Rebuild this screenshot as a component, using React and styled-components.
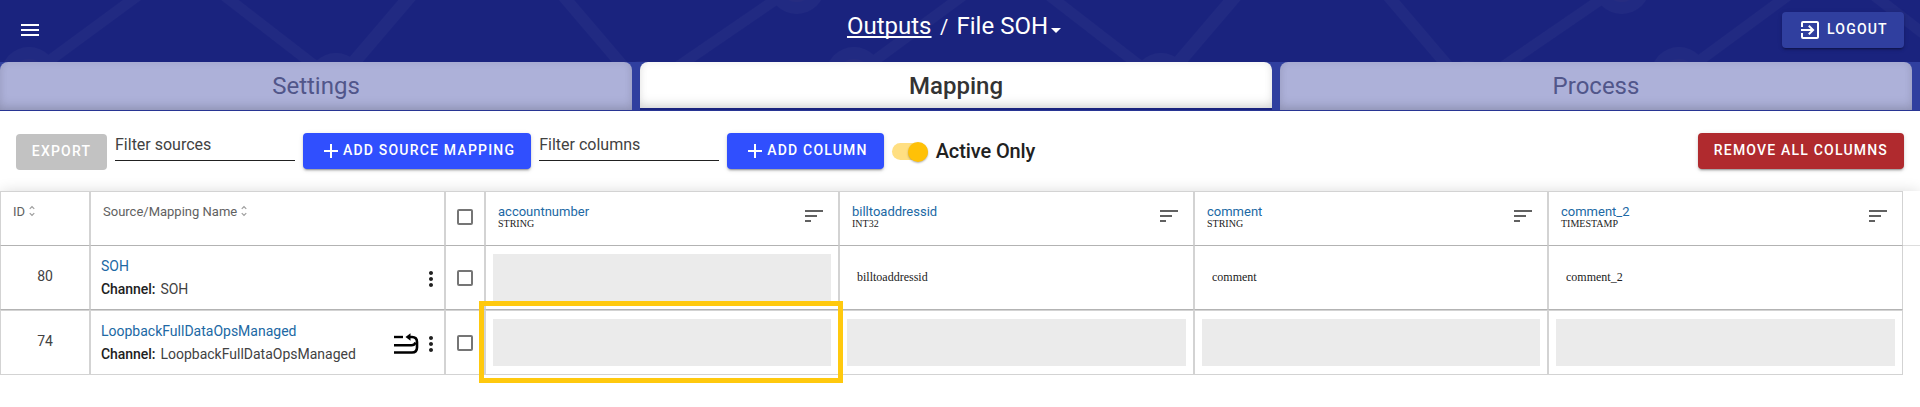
import React from 'react';
import styled, { createGlobalStyle, css } from 'styled-components';
import {
  MdMenu,
  MdExitToApp,
  MdAdd,
  MdSort,
  MdMoreVert,
  MdUnfoldMore,
  MdArrowDropDown,
} from 'react-icons/md';

const GlobalStyle = createGlobalStyle`
  * { box-sizing: border-box; }
  body {
    margin: 0;
    background: #fff;
    color: #212121;
    font-family: Roboto, "Liberation Sans", sans-serif;
    overflow: hidden;
  }
  svg { display: block; flex: none; }
`;

const Page = styled.div`
  display: flex;
  flex-direction: column;
  width: 100%;
  height: 100vh;
  overflow: hidden;
`;

const Header = styled.header`
  position: relative;
  display: grid;
  grid-template-columns: 1fr auto 1fr;
  height: 62px;
  padding: 0 16px 0 18px;
  background: #1a237e;
  color: #fff;
`;

const Backdrop = styled.svg`
  position: absolute;
  inset: 0;
  width: 100%;
  height: 100%;
`;

const MenuButton = styled.button`
  position: relative;
  justify-self: start;
  width: 24px;
  height: 24px;
  margin: 18px 0 0;
  padding: 0;
  border: 0;
  background: none;
  color: #fff;
`;

const Breadcrumb = styled.nav`
  position: relative;
  display: flex;
  align-items: baseline;
  height: 28px;
  margin: 12px 7px 0 0;
  font-size: 24px;
  line-height: 28px;
  white-space: pre;
`;

const CrumbLink = styled.a`
  color: #fff;
  text-decoration: underline;
  text-decoration-thickness: 2px;
  text-underline-offset: 2px;
  text-decoration-skip-ink: none;
`;

const Slash = styled.span`
  width: 25px;
  text-align: center;
  font-size: 20px;
`;

const Caret = styled(MdArrowDropDown)`
  align-self: flex-start;
  margin: 6px 0 0 -4px;
`;

const Button = styled.button`
  position: relative;
  display: flex;
  align-items: center;
  height: 36px;
  padding: 0 16px;
  border: 0;
  border-radius: 4px;
  background: ${(p) => p.$bg};
  color: #fff;
  font-family: inherit;
  font-size: 14px;
  font-weight: 500;
  letter-spacing: 1.2px;
  text-transform: uppercase;
  white-space: nowrap;
  box-shadow: ${(p) =>
    p.$flat
      ? 'none'
      : '0 3px 1px -2px rgba(0,0,0,.2), 0 2px 2px 0 rgba(0,0,0,.14), 0 1px 5px 0 rgba(0,0,0,.12)'};
`;

const ButtonLabel = styled.span`
  padding-bottom: 2px;
`;

const LogoutButton = styled(Button)`
  justify-self: end;
  width: 122px;
  margin-top: 12px;
  gap: 5px;
`;

const TabBar = styled.div`
  display: grid;
  grid-template-columns: repeat(3, 1fr);
  gap: 8px;
  flex: none;
  height: 49px;
  padding-right: 8px;
  background: #303f9f;
  border-bottom: 1px solid #283593;
`;

const Tab = styled.div`
  display: flex;
  align-items: center;
  justify-content: center;
  height: 48px;
  border-radius: 8px 8px 0 0;
  background: #adb1d9;
  color: #51568a;
  font-size: 24px;
  box-shadow: inset 0 -7px 12px -4px rgba(0, 0, 0, 0.15), inset 0 0 8px rgba(0, 0, 0, 0.07);
  ${(p) =>
    p.$active &&
    css`
      height: 46px;
      background: #fff;
      color: #333;
      font-weight: 500;
      padding-top: 2px;
    `}
`;

const TabSlot = styled.div`
  ${(p) => p.$active && 'background: linear-gradient(#303f9f 46px, #1a237e 46px);'}
`;

const Toolbar = styled.div`
  display: flex;
  gap: 8px;
  flex: none;
  height: 80px;
  padding: 22px 16px 0;
`;

const ExportButton = styled(Button)`
  margin-top: 1px;
  justify-content: center;
  width: 91px;
`;

const Field = styled.input`
  width: 180px;
  height: 28px;
  padding: 0 0 5px;
  margin: 0;
  border: 0;
  border-bottom: 1px solid #212121;
  background: none;
  color: #333;
  font-family: inherit;
  font-size: 16px;
  outline: none;
  &::placeholder { color: #424242; opacity: 1; }
`;

const Switch = styled.div`
  display: flex;
  align-items: center;
  justify-content: flex-end;
  width: 36px;
  height: 17px;
  margin: 10px 0;
  border-radius: 9px;
  background: #ffdf82;
`;

const Thumb = styled.div`
  width: 20px;
  height: 20px;
  flex: none;
  border-radius: 50%;
  background: #ffc107;
  box-shadow: 0 1px 2px rgba(0, 0, 0, 0.3);
`;

const SwitchLabel = styled.span`
  height: 36px;
  line-height: 37px;
  font-size: 20px;
  font-weight: 500;
  letter-spacing: -0.1px;
`;

const Spacer = styled.div`
  flex: 1;
`;

const TableArea = styled.section`
  flex: 1;
  background: #fff;
  box-shadow: 0 0 14px -1px rgba(0, 0, 0, 0.16);
`;

const Row = styled.div`
  display: grid;
  grid-template-columns: 90px 355px 40px 354px 355px 354px 355px;
`;

const HeadStrip = styled.div`
  border-bottom: 1px solid #ddd;
  height: 55px;
`;

const Cell = styled.div`
  position: relative;
  display: flex;
  align-items: center;
  border: 0 solid #d3d3d3;
  border-width: 0 1px;
  min-width: 0;
`;

const HeadCell = styled(Cell)`
  align-items: flex-start;
  height: 55px;
  padding: 12px 12px 0 12px;
  border-top-width: 1px;
  border-bottom: 1px solid #b3b3b3;
  color: #616161;
  font-size: 13px;
  line-height: 15px;
`;

const BodyCell = styled(Cell)`
  height: ${(p) => (p.$last ? 65 : 64)}px;
  padding: 8px 7px;
  border-top-width: ${(p) => (p.$last ? 1 : 0)}px;
  border-bottom: 1px solid ${(p) => (p.$last ? '#d3d3d3' : '#b3b3b3')};
  font-size: 14px;
`;

const IdCell = styled(BodyCell)`
  justify-content: center;
  padding-bottom: 11px;
  color: #424242;
`;

const NameCell = styled(BodyCell)`
  padding: 2px 1px 0 10px;
`;

const CheckCell = styled(BodyCell)`
  justify-content: center;
  padding: 1px 0 0;
`;

const CheckHeadCell = styled(HeadCell)`
  justify-content: center;
  padding: 17px 0 0;
`;

const SortMark = styled(MdUnfoldMore)`
  margin-left: 0;
  color: #9e9e9e;
`;

const ColumnTitle = styled.div`
  flex: 1;
  color: #2068a4;
`;

const ColumnType = styled.div`
  color: #212121;
  font-family: "Liberation Serif", serif;
  font-size: 10px;
  line-height: 10px;
`;

const SortIcon = styled(MdSort)`
  color: #616161;
`;

const NameText = styled.div`
  flex: 1;
  display: flex;
  flex-direction: column;
  gap: 7px;
  padding-bottom: 2px;
  line-height: 16px;
  color: #424242;
  b { font-weight: 500; color: #212121; margin-right: 5px; letter-spacing: -0.05px; }
`;

const NameLink = styled.a`
  color: #2068a4;
`;

const Checkbox = styled.span`
  width: 16px;
  height: 16px;
  border: 2px solid #757575;
  border-radius: 2px;
`;

const Blank = styled.div`
  flex: 1;
  height: 47px;
  background: #ebebeb;
`;

const Value = styled.span`
  padding: 0 0 0 10px;
  font-family: "Liberation Serif", serif;
  font-size: 12px;
  color: #212121;
`;

const Highlight = styled.div`
  position: absolute;
  z-index: 1;
  left: -7px;
  top: -10px;
  width: 364px;
  height: 82px;
  border: 5px solid #ffc90e;
`;

const columns = [
  { name: 'accountnumber', type: 'STRING' },
  { name: 'billtoaddressid', type: 'INT32' },
  { name: 'comment', type: 'STRING' },
  { name: 'comment_2', type: 'TIMESTAMP' },
];

const rows = [
  { id: 80, name: 'SOH', values: [null, 'billtoaddressid', 'comment', 'comment_2'] },
  {
    id: 74,
    name: 'LoopbackFullDataOpsManaged',
    loopback: true,
    highlight: 0,
    values: [null, null, null, null],
  },
];

function Network() {
  return (
    <Backdrop aria-hidden="true">
      <defs>
        <pattern id="net" width="825" height="62" patternUnits="userSpaceOnUse">
          <g stroke="#212a82" strokeWidth="10.6" fill="none">
            <path d="M145.5 -10L34 72" />
            <path d="M217 -10L323 72" />
            <path d="M415.500 -10L345.500 72" strokeWidth="13" />
            <path d="M558 -10L628 72" strokeWidth="11.500" />
            <path d="M789.700 -10L670 72" />
          </g>
          <g fill="#212a82">
            <circle cx="29" cy="75" r="28" />
            <circle cx="336" cy="81" r="28" />
            <circle cx="642" cy="89" r="28" />
            <circle cx="796.700" cy="-14" r="28" />
          </g>
          <g fill="#262c81">
            <circle cx="29" cy="75" r="16" />
            <circle cx="796.700" cy="-14" r="16" />
          </g>
        </pattern>
      </defs>
      <rect width="100%" height="100%" fill="url(#net)" />
    </Backdrop>
  );
}

function LoopbackIcon() {
  return (
    <svg width="26" height="22" viewBox="0 0 26 22" fill="none" stroke="#000">
      <path d="M1 4H10" strokeWidth="2.400" />
      <path d="M1 12.300H18.500Q21.500 12.300 22.500 9.500" strokeWidth="2.400" />
      <path d="M1 19.500H19Q24 19.500 24 14.500V9Q24 4 19 4H16" strokeWidth="2.600" />
      <path d="M12.500 4L17.500 0.200V7.800Z" fill="#000" stroke="none" />
    </svg>
  );
}

export default function App() {
  return (
    <Page>
      <GlobalStyle />
      <Header>
        <Network />
        <MenuButton aria-label="Menu">
          <MdMenu size={24} />
        </MenuButton>
        <Breadcrumb>
          <CrumbLink>Outputs</CrumbLink>
          <Slash>/</Slash>
          <span>File SOH</span>
          <Caret size={24} />
        </Breadcrumb>
        <LogoutButton $bg="#303f9f">
          <MdExitToApp size={24} />
          <ButtonLabel>Logout</ButtonLabel>
        </LogoutButton>
      </Header>
      <TabBar>
        <TabSlot>
          <Tab>Settings</Tab>
        </TabSlot>
        <TabSlot $active>
          <Tab $active>Mapping</Tab>
        </TabSlot>
        <TabSlot>
          <Tab>Process</Tab>
        </TabSlot>
      </TabBar>
      <Toolbar>
        <ExportButton $bg="#c2c2c2" $flat>
          <ButtonLabel>Export</ButtonLabel>
        </ExportButton>
        <Field placeholder="Filter sources" />
        <Button $bg="#304ffe">
          <MdAdd size={24} />
          <ButtonLabel>Add source mapping</ButtonLabel>
        </Button>
        <Field placeholder="Filter columns" />
        <Button $bg="#304ffe">
          <MdAdd size={24} />
          <ButtonLabel>Add column</ButtonLabel>
        </Button>
        <Switch>
          <Thumb />
        </Switch>
        <SwitchLabel>Active Only</SwitchLabel>
        <Spacer />
        <Button $bg="#b02a2e">
          <ButtonLabel>Remove all columns</ButtonLabel>
        </Button>
      </Toolbar>
      <TableArea>
        <HeadStrip>
          <Row>
            <HeadCell>
              ID
              <SortMark size={14} />
            </HeadCell>
            <HeadCell>
              Source/Mapping Name
              <SortMark size={14} />
            </HeadCell>
            <CheckHeadCell>
              <Checkbox />
            </CheckHeadCell>
            {columns.map((c) => (
              <HeadCell key={c.name}>
                <ColumnTitle>
                  {c.name}
                  <ColumnType>{c.type}</ColumnType>
                </ColumnTitle>
                <SortIcon size={24} />
              </HeadCell>
            ))}
          </Row>
        </HeadStrip>
        {rows.map((r, i) => {
          const last = i === rows.length - 1;
          return (
            <Row key={r.id}>
              <IdCell $last={last}>{r.id}</IdCell>
              <NameCell $last={last}>
                <NameText>
                  <NameLink>{r.name}</NameLink>
                  <span>
                    <b>Channel:</b>
                    {r.name}
                  </span>
                </NameText>
                {r.loopback && <LoopbackIcon />}
                <MdMoreVert size={24} />
              </NameCell>
              <CheckCell $last={last}>
                <Checkbox />
              </CheckCell>
              {r.values.map((v, j) => (
                <BodyCell key={columns[j].name} $last={last}>
                  {v ? <Value>{v}</Value> : <Blank />}
                  {r.highlight === j && <Highlight />}
                </BodyCell>
              ))}
            </Row>
          );
        })}
      </TableArea>
    </Page>
  );
}
